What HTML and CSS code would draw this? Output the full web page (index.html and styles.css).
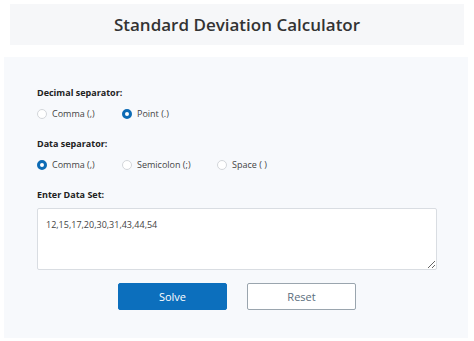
FILE: index.html
```html
<!DOCTYPE html>
<html lang="en">
<head>
  <meta charset="UTF-8" />
  <title>Standard Deviation Calculator</title>
  <link rel="stylesheet" href="styles.css">
</head>
<body>
  <div class="sd-header">
    <h1 class="sd-title">Standard Deviation Calculator</h1>
  </div>
  <div class="sd-panel">
    <div class="sd-group">
      <div class="sd-label">Decimal separator:</div>
      <div class="sd-options">
        <label class="sd-radio w1"><span class="dot"></span>Comma (,)</label>
        <label class="sd-radio"><span class="dot on"></span>Point (.)</label>
      </div>
    </div>
    <div class="sd-group">
      <div class="sd-label">Data separator:</div>
      <div class="sd-options">
        <label class="sd-radio w1"><span class="dot on"></span>Comma (,)</label>
        <label class="sd-radio w2"><span class="dot"></span>Semicolon (;)</label>
        <label class="sd-radio"><span class="dot"></span>Space ( )</label>
      </div>
    </div>
    <div class="sd-group">
      <div class="sd-label">Enter Data Set:</div>
      <textarea class="sd-data">12,15,17,20,30,31,43,44,54</textarea>
    </div>
    <div class="sd-actions">
      <button class="sd-btn solve">Solve</button>
      <button class="sd-btn reset">Reset</button>
    </div>
  </div>
</body>
</html>
```
FILE: styles.css
```css
body {
  margin: 0;
  background: #fff;
  font-family: 'Open Sans', 'Noto Sans', Arial, sans-serif;
  color: #333;
  width: 474px;
}
.sd-header {
  margin: 4px 10px 0 10px;
  height: 41px;
  background: #f6f7f9;
  display: flex;
  align-items: center;
  justify-content: center;
}
.sd-title {
  margin: 0;
  font-size: 17px;
  font-weight: 600;
  color: #333;
}
.sd-panel {
  margin: 12px 6px 0 4px;
  background: #f7f9fc;
  padding: 29px 33px 20px 33px;
  height: 232px;
}
.sd-group {
  margin-bottom: 17px;
}
.sd-label {
  font-size: 9px;
  font-weight: 700;
  color: #222;
  margin-bottom: 8px;
}
.sd-options {
  display: flex;
  align-items: center;
}
.sd-radio {
  display: flex;
  align-items: center;
  font-size: 9px;
  color: #444;
}
.sd-radio.w1 { width: 85px; }
.sd-radio.w2 { width: 95px; }
.dot {
  width: 8px;
  height: 8px;
  border: 1px solid #d3d6da;
  border-radius: 50%;
  background: #fff;
  margin-right: 5px;
}
.dot.on {
  width: 4px;
  height: 4px;
  border: 3px solid #0c6bb5;
}
.sd-data {
  display: block;
  box-sizing: border-box;
  width: 400px;
  height: 62px;
  border: 1px solid #d9dde2;
  border-radius: 2px;
  padding: 9px 8px;
  font-family: inherit;
  font-size: 9px;
  color: #444;
  resize: vertical;
  margin-top: -1px;
}
.sd-actions {
  display: flex;
  gap: 20px;
  margin: -4px 0 0 81px;
}
.sd-btn {
  width: 109px;
  height: 27px;
  border-radius: 2px;
  font-family: inherit;
  font-size: 11px;
  cursor: pointer;
}
.sd-btn.solve {
  background: #0c6fbd;
  border: 1px solid #0c6fbd;
  color: #fff;
}
.sd-btn.reset {
  background: #fff;
  border: 1px solid #9aa5ae;
  color: #5b6d7c;
}
```
